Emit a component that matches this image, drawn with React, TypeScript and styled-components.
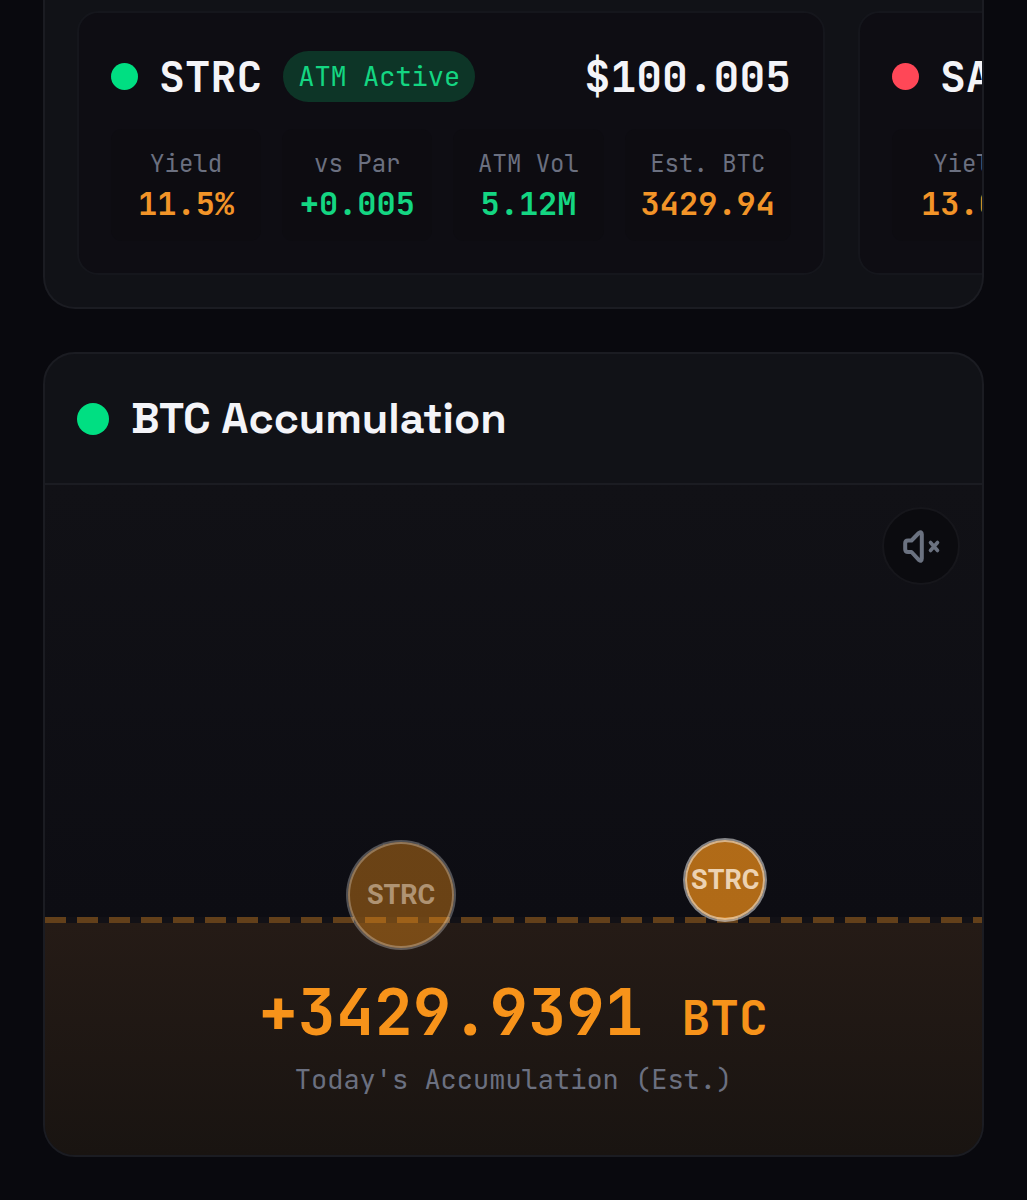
import React from "react";
import styled, { createGlobalStyle } from "styled-components";

const mono = `"JetBrains Mono", "DejaVu Sans Mono", "Liberation Mono", monospace`;
const color = {
  page: "#09090e",
  card: "#111217",
  inset: "#0e0d13",
  line: "#1b1c22",
  lineSoft: "#15161c",
  text: "#f4f4f8",
  muted: "#6b7080",
  green: "#14d682",
  greenDot: "#00df82",
  red: "#ff4757",
  orange: "#f7931a",
  amber: "#f29428",
};

const GlobalStyle = createGlobalStyle`
  *, *::before, *::after { box-sizing: border-box; }
  html { background: ${color.page}; }
  body { margin: 0; background: ${color.page}; }
  h2, h3, p, dl, dd { margin: 0; }
`;

const Page = styled.main`
  display: flex;
  flex-direction: column;
  gap: 43px;
  padding: 0 43px;
  font-family: ${mono};
  color: ${color.text};
`;

const Card = styled.section`
  border: 2px solid ${color.line};
  border-radius: 32px;
  background: ${color.card};
  overflow: hidden;
`;

const TickerCard = styled(Card)`
  border-top: 0;
  border-radius: 0 0 32px 32px;
`;

const TickerStrip = styled.div`
  display: flex;
  gap: 33px;
  padding: 11px 32px 32px;
  overflow: hidden;
`;

const Ticker = styled.article`
  flex: none;
  width: 748px;
  padding: 32px;
  border: 2px solid ${color.lineSoft};
  border-radius: 21px;
  background: ${color.inset};
`;

const TickerHeader = styled.header`
  display: flex;
  align-items: center;
  gap: 21px;
  margin-bottom: 21px;
  line-height: 63px;
`;

const Dot = styled.span<{ $size: number; $color: string }>`
  flex: none;
  width: ${(p) => p.$size}px;
  height: ${(p) => p.$size}px;
  border-radius: 50%;
  background: ${(p) => p.$color};
`;

const Symbol = styled.h3`
  font-size: 43px;
  font-weight: 700;
  line-height: 63px;
`;

const Badge = styled.span`
  padding: 0 15px;
  border-radius: 26px;
  background: #0d3527;
  color: ${color.green};
  font-size: 27px;
  line-height: 51px;
`;

const Price = styled.span`
  margin-left: auto;
  font-size: 43px;
  font-weight: 700;
`;

const Stats = styled.dl`
  display: grid;
  grid-template-columns: repeat(4, 1fr);
  gap: 21px;
`;

const Stat = styled.div`
  padding: 16px;
  border-radius: 11px;
  background: #0d0c11;
  text-align: center;
  white-space: nowrap;
`;

const StatLabel = styled.dt`
  color: ${color.muted};
  font-size: 24px;
  line-height: 38px;
`;

const StatValue = styled.dd<{ $color: string }>`
  color: ${(p) => p.$color};
  font-size: 32px;
  font-weight: 700;
  line-height: 42px;
`;

const CardHeader = styled.header`
  display: flex;
  align-items: center;
  gap: 22px;
  padding: 32px;
  border-bottom: 2px solid ${color.line};
`;

const Title = styled.h2`
  font-family: "Space Grotesk", Inter, sans-serif;
  font-size: 43px;
  font-weight: 600;
  line-height: 65px;
`;

const Stage = styled.div`
  position: relative;
  display: flex;
  flex-direction: column;
`;

const Sky = styled.div`
  display: flex;
  justify-content: flex-end;
  align-items: flex-start;
  height: 432px;
  padding: 22px;
  background: linear-gradient(#111116, #0d0d13);
`;

const MuteButton = styled.button`
  display: grid;
  place-items: center;
  width: 78px;
  height: 78px;
  padding: 0;
  border: 2px solid #16161b;
  border-radius: 50%;
  background: #0b0b0f;
  color: #6b7280;
  cursor: pointer;
`;

const WaterLine = styled.div`
  height: 6px;
  background: repeating-linear-gradient(90deg, #63401a 0 21px, #121116 21px 32px);
`;

const Pool = styled.div`
  padding: 43px 32px 54px;
  background: linear-gradient(#251b16, #191411);
  text-align: center;
`;

const Total = styled.p`
  color: ${color.orange};
  font-size: 64px;
  font-weight: 700;
  line-height: 92px;
  white-space: nowrap;
`;

const Unit = styled.span`
  font-size: 48px;
  line-height: 48px;
`;

const Caption = styled.p`
  color: ${color.muted};
  font-size: 27px;
  line-height: 43px;
`;

const Bubble = styled.span<{ $size: number; $x: number; $bottom: number; $alpha: number }>`
  position: absolute;
  left: ${(p) => p.$x}%;
  bottom: ${(p) => p.$bottom}px;
  display: grid;
  place-items: center;
  width: ${(p) => p.$size}px;
  height: ${(p) => p.$size}px;
  margin-left: ${(p) => -p.$size / 2}px;
  border: 2px solid rgba(255, 255, 255, ${(p) => p.$alpha * 0.7});
  border-radius: 50%;
  background: rgba(247, 147, 26, ${(p) => p.$alpha}) padding-box;
  box-shadow: inset 0 0 0 2px rgba(255, 255, 255, ${(p) => p.$alpha * 0.7});
  color: rgba(255, 240, 222, ${(p) => p.$alpha + 0.08});
  font-family: Roboto, sans-serif;
  font-size: 27px;
  font-weight: 700;
  line-height: 32px;
`;

const NextCard = styled.div`
  height: 1px;
  margin: 0 32px;
  background: ${color.lineSoft};
`;

type StatData = { label: string; value: string; color: string };

function TickerPanel(props: {
  symbol: string;
  dot: string;
  badge?: string;
  price?: string;
  stats: StatData[];
}) {
  return (
    <Ticker>
      <TickerHeader>
        <Dot $size={27} $color={props.dot} />
        <Symbol>{props.symbol}</Symbol>
        {props.badge && <Badge>{props.badge}</Badge>}
        {props.price && <Price>{props.price}</Price>}
      </TickerHeader>
      <Stats>
        {props.stats.map((s) => (
          <Stat key={s.label}>
            <StatLabel>{s.label}</StatLabel>
            <StatValue $color={s.color}>{s.value}</StatValue>
          </Stat>
        ))}
      </Stats>
    </Ticker>
  );
}

const strc: StatData[] = [
  { label: "Yield", value: "11.5%", color: color.amber },
  { label: "vs Par", value: "+0.005", color: color.green },
  { label: "ATM Vol", value: "5.12M", color: color.green },
  { label: "Est. BTC", value: "3429.94", color: color.amber },
];

const sata: StatData[] = [{ label: "Yield", value: "13.0%", color: color.amber }];

export default function App() {
  return (
    <>
      <GlobalStyle />
      <Page>
        <TickerCard>
          <TickerStrip>
            <TickerPanel symbol="STRC" dot={color.greenDot} badge="ATM Active" price="$100.005" stats={strc} />
            <TickerPanel symbol="SATA" dot={color.red} stats={sata} />
          </TickerStrip>
        </TickerCard>
        <Card>
          <CardHeader>
            <Dot $size={32} $color={color.greenDot} />
            <Title>BTC Accumulation</Title>
          </CardHeader>
          <Stage>
            <Sky>
              <MuteButton type="button" aria-label="Unmute">
                <svg width="42" height="42" viewBox="0 0 42 42" fill="none" stroke="currentColor" strokeWidth="4" strokeLinecap="round" strokeLinejoin="round">
                  <path d="M18.8 8 11.5 15.5H8Q5.2 15.5 5.2 18.3V24.3Q5.2 27 8 27H11.5L18.8 34.8Q21.8 37 21.8 33.5V9.3Q21.8 5.8 18.8 8Z" />
                  <path d="m30.5 17.5 7 8m0-8-7 8" strokeWidth="3.6" />
                </svg>
              </MuteButton>
            </Sky>
            <WaterLine />
            <Pool>
              <Total>
                +3429.9391 <Unit>BTC</Unit>
              </Total>
              <Caption>Today's Accumulation (Est.)</Caption>
            </Pool>
            <Bubble $size={110} $x={38} $bottom={205} $alpha={0.4}>STRC</Bubble>
            <Bubble $size={84} $x={72.6} $bottom={233} $alpha={0.7}>STRC</Bubble>
          </Stage>
        </Card>
        <NextCard />
      </Page>
    </>
  );
}
